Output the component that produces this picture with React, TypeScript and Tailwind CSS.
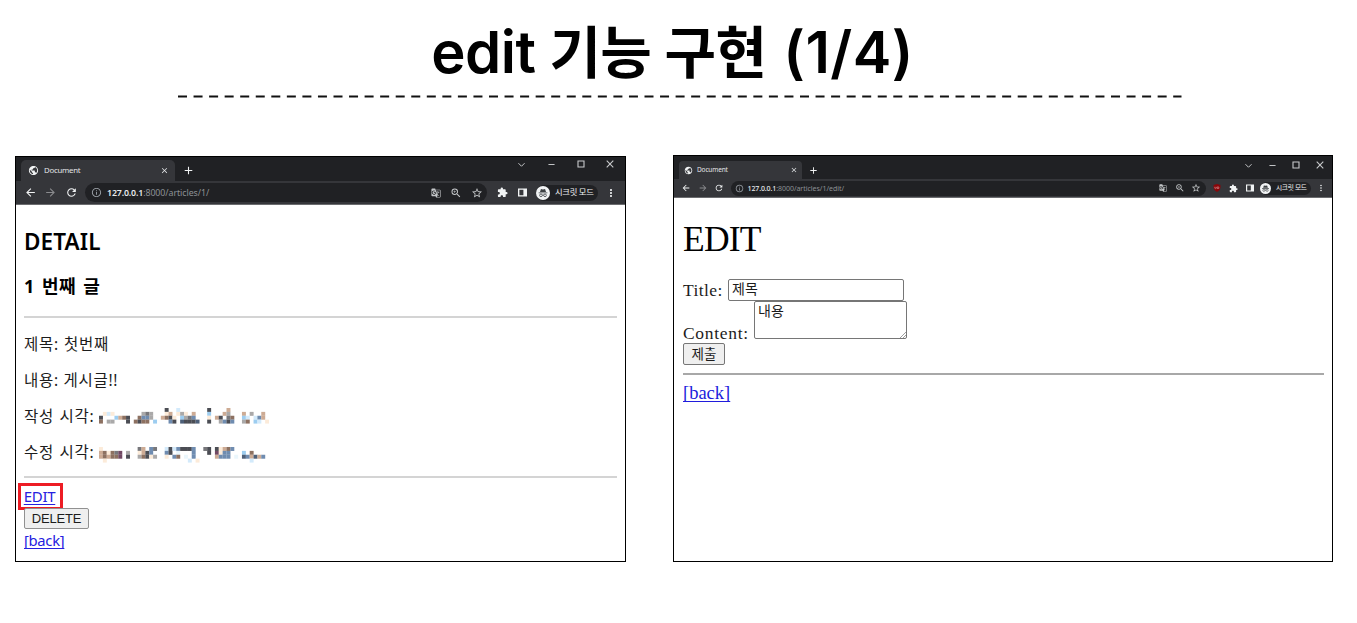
import type { ReactNode } from 'react';
import {
  MdAdd, MdArrowBack, MdArrowForward, MdClose, MdExtension, MdGTranslate, MdInfoOutline,
  MdMoreVert, MdPublic, MdRefresh, MdStarBorder, MdZoomIn,
} from 'react-icons/md';

const ui = "font-['Noto_Sans','Noto_Sans_CJK_KR',sans-serif]";

function Slot({ className, children }: { className: string; children: ReactNode }) {
  return <span className={`flex shrink-0 items-center justify-center ${className}`}>{children}</span>;
}

function SidePanelIcon({ className }: { className: string }) {
  return (
    <svg viewBox="0 0 10 10" className={className}>
      <path d="M0 0.5h10v9H0z M1.5 2v6H6V2z" fill="#f1f3f4" fillRule="evenodd" />
    </svg>
  );
}

function IncognitoIcon({ className }: { className: string }) {
  return (
    <svg viewBox="0 0 24 24" className={className}>
      <circle cx="12" cy="12" r="12" fill="#f1f3f4" />
      <path d="M8.500 5.200 12 6l3.500-.8 1.700 5H6.800zM4.500 11h15v1.500h-15z" fill="#3c4043" />
      <g fill="none" stroke="#3c4043" strokeWidth="1.300">
        <circle cx="8.500" cy="16" r="2.300" />
        <circle cx="15.500" cy="16" r="2.300" />
        <path d="M10.800 15.700q1.200-.8 2.400 0" />
      </g>
    </svg>
  );
}

function ShieldIcon({ className }: { className: string }) {
  return (
    <svg viewBox="0 0 10 10" className={className}>
      <path d="M5 0 9.300 1.200V5Q9 8.300 5 10 1 8.300.7 5V1.200z" fill="#8b0509" />
      <path d="M2.300 3.500v1.800q.8 1 1.600 0V3.500M5.100 3.700h2.200v1.900H5.100z" stroke="#e8b9ba" strokeWidth=".6" fill="none" />
    </svg>
  );
}

function WindowControls({ className, slot }: { className: string; slot: string }) {
  const stroke = { fill: 'none', stroke: '#c8cacc', strokeWidth: 1.1 };
  return (
    <div className={`flex ${className}`}>
      <Slot className={slot}><svg viewBox="0 0 8 8" className="size-[7px]"><path d="m.5 2.500L4 6l3.500-3.500" {...stroke} /></svg></Slot>
      <Slot className={slot}><svg viewBox="0 0 8 8" className="size-[7px]"><path d="M.5 4h7" {...stroke} /></svg></Slot>
      <Slot className={slot}><svg viewBox="0 0 8 8" className="size-[8px]"><path d="M1 1h6v6H1z" {...stroke} /></svg></Slot>
      <Slot className={slot}><svg viewBox="0 0 8 8" className="size-[8px]"><path d="m.7.7 6.600 6.600M7.300.7.7 7.300" {...stroke} /></svg></Slot>
    </div>
  );
}

const palette: Record<string, string> = {
  k: '#4b4d54', d: '#77777b', g: '#aaa9a9', b: '#8d7161', t: '#cdab94', c: '#fcebd9',
  l: '#d3eafb', s: '#6f8cb0', u: '#9dcdf0', w: '#eaf6fc', p: '#704863', n: '#4e6079',
};

const createdAt = [
  '.................k..l.......k....t..........',
  '.clc.......gdg...ct.cgc.t...u...tg...t.g..t.',
  'k...utbk..bssg..tbkc.ugds...c.tk.db..ul.lst.',
  'b.gg...k.bkbb.u...sk.nkkkn..k..gsks..gb.ul.c',
];
const updatedAt = [
  'c.........dt.sd..lklskkks..dk.kctbs.........',
  'tbcbdp.g..ctks...sk.w...s...k.pcss...u.b....',
  'tbtbbp.k..gbkcg..c.sb.w.s.....tsss.w.nstnts.',
  '.c.....................l.c.............l....',
];

function Mosaic({ rows, className }: { rows: string[]; className: string }) {
  return (
    <svg viewBox="0 0 44 4" preserveAspectRatio="none" className={`h-[15.500px] w-[170px] ${className}`}>
      {rows.flatMap((row, y) =>
        [...row].map((cell, x) =>
          cell === '.' ? null : <rect key={`${x}-${y}`} x={x} y={y} width="1.020" height="1.020" fill={palette[cell]} />,
        ),
      )}
    </svg>
  );
}

function DetailWindow() {
  return (
    <section className={`h-[406px] w-[611px] shrink-0 overflow-hidden border border-black bg-white ${ui}`}>
      <div className="flex h-[24px] justify-between bg-[#202124] pl-[5px]">
        <div className="flex">
          <div className="mt-[3px] flex h-[21px] w-[154px] items-center rounded-t-[5px] bg-[#35363a] pl-[7px] text-[#e2e4e6]">
            <MdPublic className="size-[11px] text-[#f1f3f4]" />
            <span className="ml-[5px] text-[7.800px] tracking-[-0.250px]">Document</span>
            <MdClose className="ml-auto mr-[6px] size-[9px]" />
          </div>
          <MdAdd className="ml-[7px] mt-[7px] size-[13px] text-[#f1f3f4]" />
        </div>
        <WindowControls className="h-[14px]" slot="w-[29.500px]" />
      </div>
      <div className="flex h-[24px] items-center border-b border-[#6b6c6f] bg-[#35363a] pl-[4px] text-[#f1f3f4]">
        <Slot className="w-[20.500px]"><MdArrowBack className="size-[13px]" /></Slot>
        <Slot className="w-[20.500px]"><MdArrowForward className="size-[13px] text-[#8a8b8e]" /></Slot>
        <Slot className="w-[20.500px]"><MdRefresh className="size-[13px]" /></Slot>
        <div className="ml-[3.500px] flex h-[19px] w-[402px] items-center rounded-full bg-[#202124] text-[#c4c7c9]">
          <Slot className="w-[22px]"><MdInfoOutline className="size-[11px] text-[#9aa0a6]" /></Slot>
          <span className="mt-[2px] text-[8.800px] tracking-[-0.060px] text-[#8d9196]"><b className="font-semibold tracking-[-0.150px] text-[#e8eaed]">127.0.0.1</b>:8000/articles/1/</span>
          <Slot className="ml-auto w-[20.500px]"><MdGTranslate className="size-[10px]" /></Slot>
          <Slot className="w-[20.500px]"><MdZoomIn className="size-[12px]" /></Slot>
          <Slot className="w-[20.500px]"><MdStarBorder className="size-[12px]" /></Slot>
        </div>
        <Slot className="ml-[5px] w-[20.500px]"><MdExtension className="size-[11px]" /></Slot>
        <Slot className="w-[20.500px]"><SidePanelIcon className="size-[9px]" /></Slot>
        <div className="ml-[3px] flex h-[16px] w-[62px] items-center rounded-full bg-[#202124]">
          <IncognitoIcon className="size-[14px]" />
          <span className="ml-[5px] whitespace-nowrap text-[8.300px] tracking-[-0.300px]">시크릿 모드</span>
        </div>
        <Slot className="ml-[3px] w-[20px]"><MdMoreVert className="size-[12px]" /></Slot>
      </div>
      <div className="flex flex-col items-start px-[8px] pt-[21px] text-[15.500px] leading-[22px] tracking-[0.800px] text-[#1c1c1c]">
        <h1 className="h-[30px] text-[22.500px] font-semibold leading-[31px] tracking-[0.100px] text-black">DETAIL</h1>
        <h2 className="mt-[18px] h-[24px] text-[18px] font-bold leading-[25px] tracking-[0.300px] text-black [word-spacing:2.500px]">1 번째 글</h2>
        <hr className="mt-[18px] h-[2px] w-full border-0 bg-[#d4d4d4]" />
        <p className="mt-[15px] h-[22px]">제목: 첫번째</p>
        <p className="mt-[14px] h-[22px] tracking-[0.700px]">내용: 게시글!!</p>
        <p className="mt-[14px] flex h-[22px] items-start whitespace-nowrap"><span className="w-[75px] [word-spacing:0.500px]">작성 시각:</span><Mosaic rows={createdAt} className="mt-[3px]" /></p>
        <p className="mt-[14px] flex h-[22px] items-start whitespace-nowrap"><span className="w-[75px] [word-spacing:0.500px]">수정 시각:</span><Mosaic rows={updatedAt} className="mt-[6px]" /></p>
        <hr className="mt-[13px] h-[2px] w-full border-0 bg-[#d4d4d4]" />
        <a className="-ml-[6px] mt-[5px] flex h-[27px] w-[45px] items-center justify-center border-[3px] border-[#ed1c24] pr-[2px] text-[15px] tracking-[-0.300px] text-[#2620e0] underline underline-offset-2"><span className="-mt-px">EDIT</span></a>
        <button className="-mt-[2px] h-[21px] w-[65px] rounded-[2px] border border-[#919191] bg-[#efefef] font-['Liberation_Sans',sans-serif] text-[13px] leading-[18px] tracking-[-0.200px]">DELETE</button>
        <a className="h-[22px] text-[14.800px] tracking-[-0.300px] text-[#2620e0] underline underline-offset-2">[back]</a>
      </div>
    </section>
  );
}

function EditWindow() {
  return (
    <section className={`h-[407px] w-[660px] shrink-0 overflow-hidden border border-black bg-white ${ui}`}>
      <div className="flex h-[23px] justify-between bg-[#202124] pl-[5px]">
        <div className="flex">
          <div className="mt-[5px] flex h-[18px] w-[123px] items-center rounded-t-[4px] bg-[#35363a] pl-[5px] text-[#e2e4e6]">
            <MdPublic className="size-[9px] text-[#f1f3f4]" />
            <span className="ml-[4px] text-[6.500px] tracking-[-0.150px]">Document</span>
            <MdClose className="ml-auto mr-[4px] size-[8px]" />
          </div>
          <MdAdd className="ml-[6px] mt-[9px] size-[11px] text-[#f1f3f4]" />
        </div>
        <WindowControls className="mt-[2px] h-[14px]" slot="w-[23.800px]" />
      </div>
      <div className="flex h-[19px] items-center border-b border-[#6b6c6f] bg-[#35363a] pl-[4px] text-[#f1f3f4]">
        <Slot className="w-[16.500px]"><MdArrowBack className="size-[10px]" /></Slot>
        <Slot className="w-[16.500px]"><MdArrowForward className="size-[10px] text-[#8a8b8e]" /></Slot>
        <Slot className="w-[16.500px]"><MdRefresh className="size-[10px]" /></Slot>
        <div className="ml-[3px] flex h-[15px] w-[475px] items-center rounded-full bg-[#202124] text-[#c4c7c9]">
          <Slot className="w-[17px]"><MdInfoOutline className="size-[9px] text-[#9aa0a6]" /></Slot>
          <span className="mt-[2px] text-[7px] tracking-[-0.030px] text-[#8d9196]"><b className="font-medium tracking-[-0.120px] text-[#e8eaed]">127.0.0.1</b>:8000/articles/1/edit/</span>
          <Slot className="ml-auto w-[16.500px]"><MdGTranslate className="size-[8px]" /></Slot>
          <Slot className="w-[16.500px]"><MdZoomIn className="size-[10px]" /></Slot>
          <Slot className="mr-px w-[16.500px]"><MdStarBorder className="size-[10px]" /></Slot>
        </div>
        <Slot className="ml-[3px] w-[16.500px]"><ShieldIcon className="size-[8px]" /></Slot>
        <Slot className="w-[16.500px]"><MdExtension className="size-[9px]" /></Slot>
        <Slot className="w-[16.500px]"><SidePanelIcon className="size-[8px]" /></Slot>
        <div className="ml-[2px] flex h-[13px] w-[51px] items-center rounded-full bg-[#202124]">
          <IncognitoIcon className="size-[11px]" />
          <span className="ml-[5px] whitespace-nowrap text-[6.700px] tracking-[-0.300px]">시크릿 모드</span>
        </div>
        <Slot className="ml-[1px] w-[17px]"><MdMoreVert className="size-[10px]" /></Slot>
      </div>
      <div className="flex flex-col items-start pl-[9px] pr-[8px] pt-[20px] font-['Liberation_Serif','Noto_Sans_CJK_KR',serif] text-[17.500px] leading-[20px] text-[#1c1c1c]">
        <h1 className="h-[42px] text-[35.500px] leading-[42px] tracking-[-0.800px] text-black">EDIT</h1>
        <div className="mt-[19px] flex h-[22px] items-center">
          <label className="w-[45px] whitespace-nowrap tracking-[0.400px]">Title:</label>
          <div className="flex h-[22px] w-[176px] items-center rounded-[2px] border border-[#767676] pl-[3px] text-[14px]">제목</div>
        </div>
        <div className="flex h-[42px] items-start">
          <label className="mt-[22px] w-[71px] whitespace-nowrap tracking-[0.700px]">Content:</label>
          <div className="flex h-[38px] w-[153px] items-start justify-between rounded-[2px] border border-[#767676] pl-[3px] text-[14px]">
            내용
            <svg viewBox="0 0 6 6" className="size-[6px] self-end"><path d="m0 6 6-6M3 6l3-3" stroke="#777" strokeWidth=".7" /></svg>
          </div>
        </div>
        <button className="h-[22px] w-[42px] rounded-[2px] border border-[#767676] bg-[#efefef] text-[13.500px] leading-[19px]">제출</button>
        <hr className="mt-[8px] h-[2px] w-full border-0 bg-[#a8a8a8]" />
        <a className="mt-[8px] h-[22px] text-[18.500px] text-[#201cdc] underline underline-offset-2">[back]</a>
      </div>
    </section>
  );
}

export default function App() {
  return (
    <main className="flex h-[623px] w-[1357px] flex-col overflow-hidden bg-white">
      <header className="flex flex-col items-center pr-[12px]">
        <h1 className="mt-[17px] h-[70px] whitespace-nowrap font-['Inter','Noto_Sans_CJK_KR',sans-serif] text-[58px] font-semibold leading-[70px] tracking-[-0.500px] text-black">
          edit <span className="text-[56px] tracking-[-0.700px]">기능 구현</span> <span className="ml-[3px] tracking-[0.400px]">(1/4)</span>
        </h1>
      </header>
      <svg viewBox="0 0 1004 3" className="ml-[178px] mt-[8px] h-[3px] w-[1004px] shrink-0">
        <path d="M0 1.500h1003.500" stroke="#111" strokeWidth="2.200" strokeDasharray="9 6.550" />
      </svg>
      <div className="mt-[57px] flex items-end gap-[47px] pl-[15px]">
        <DetailWindow />
        <EditWindow />
      </div>
    </main>
  );
}
